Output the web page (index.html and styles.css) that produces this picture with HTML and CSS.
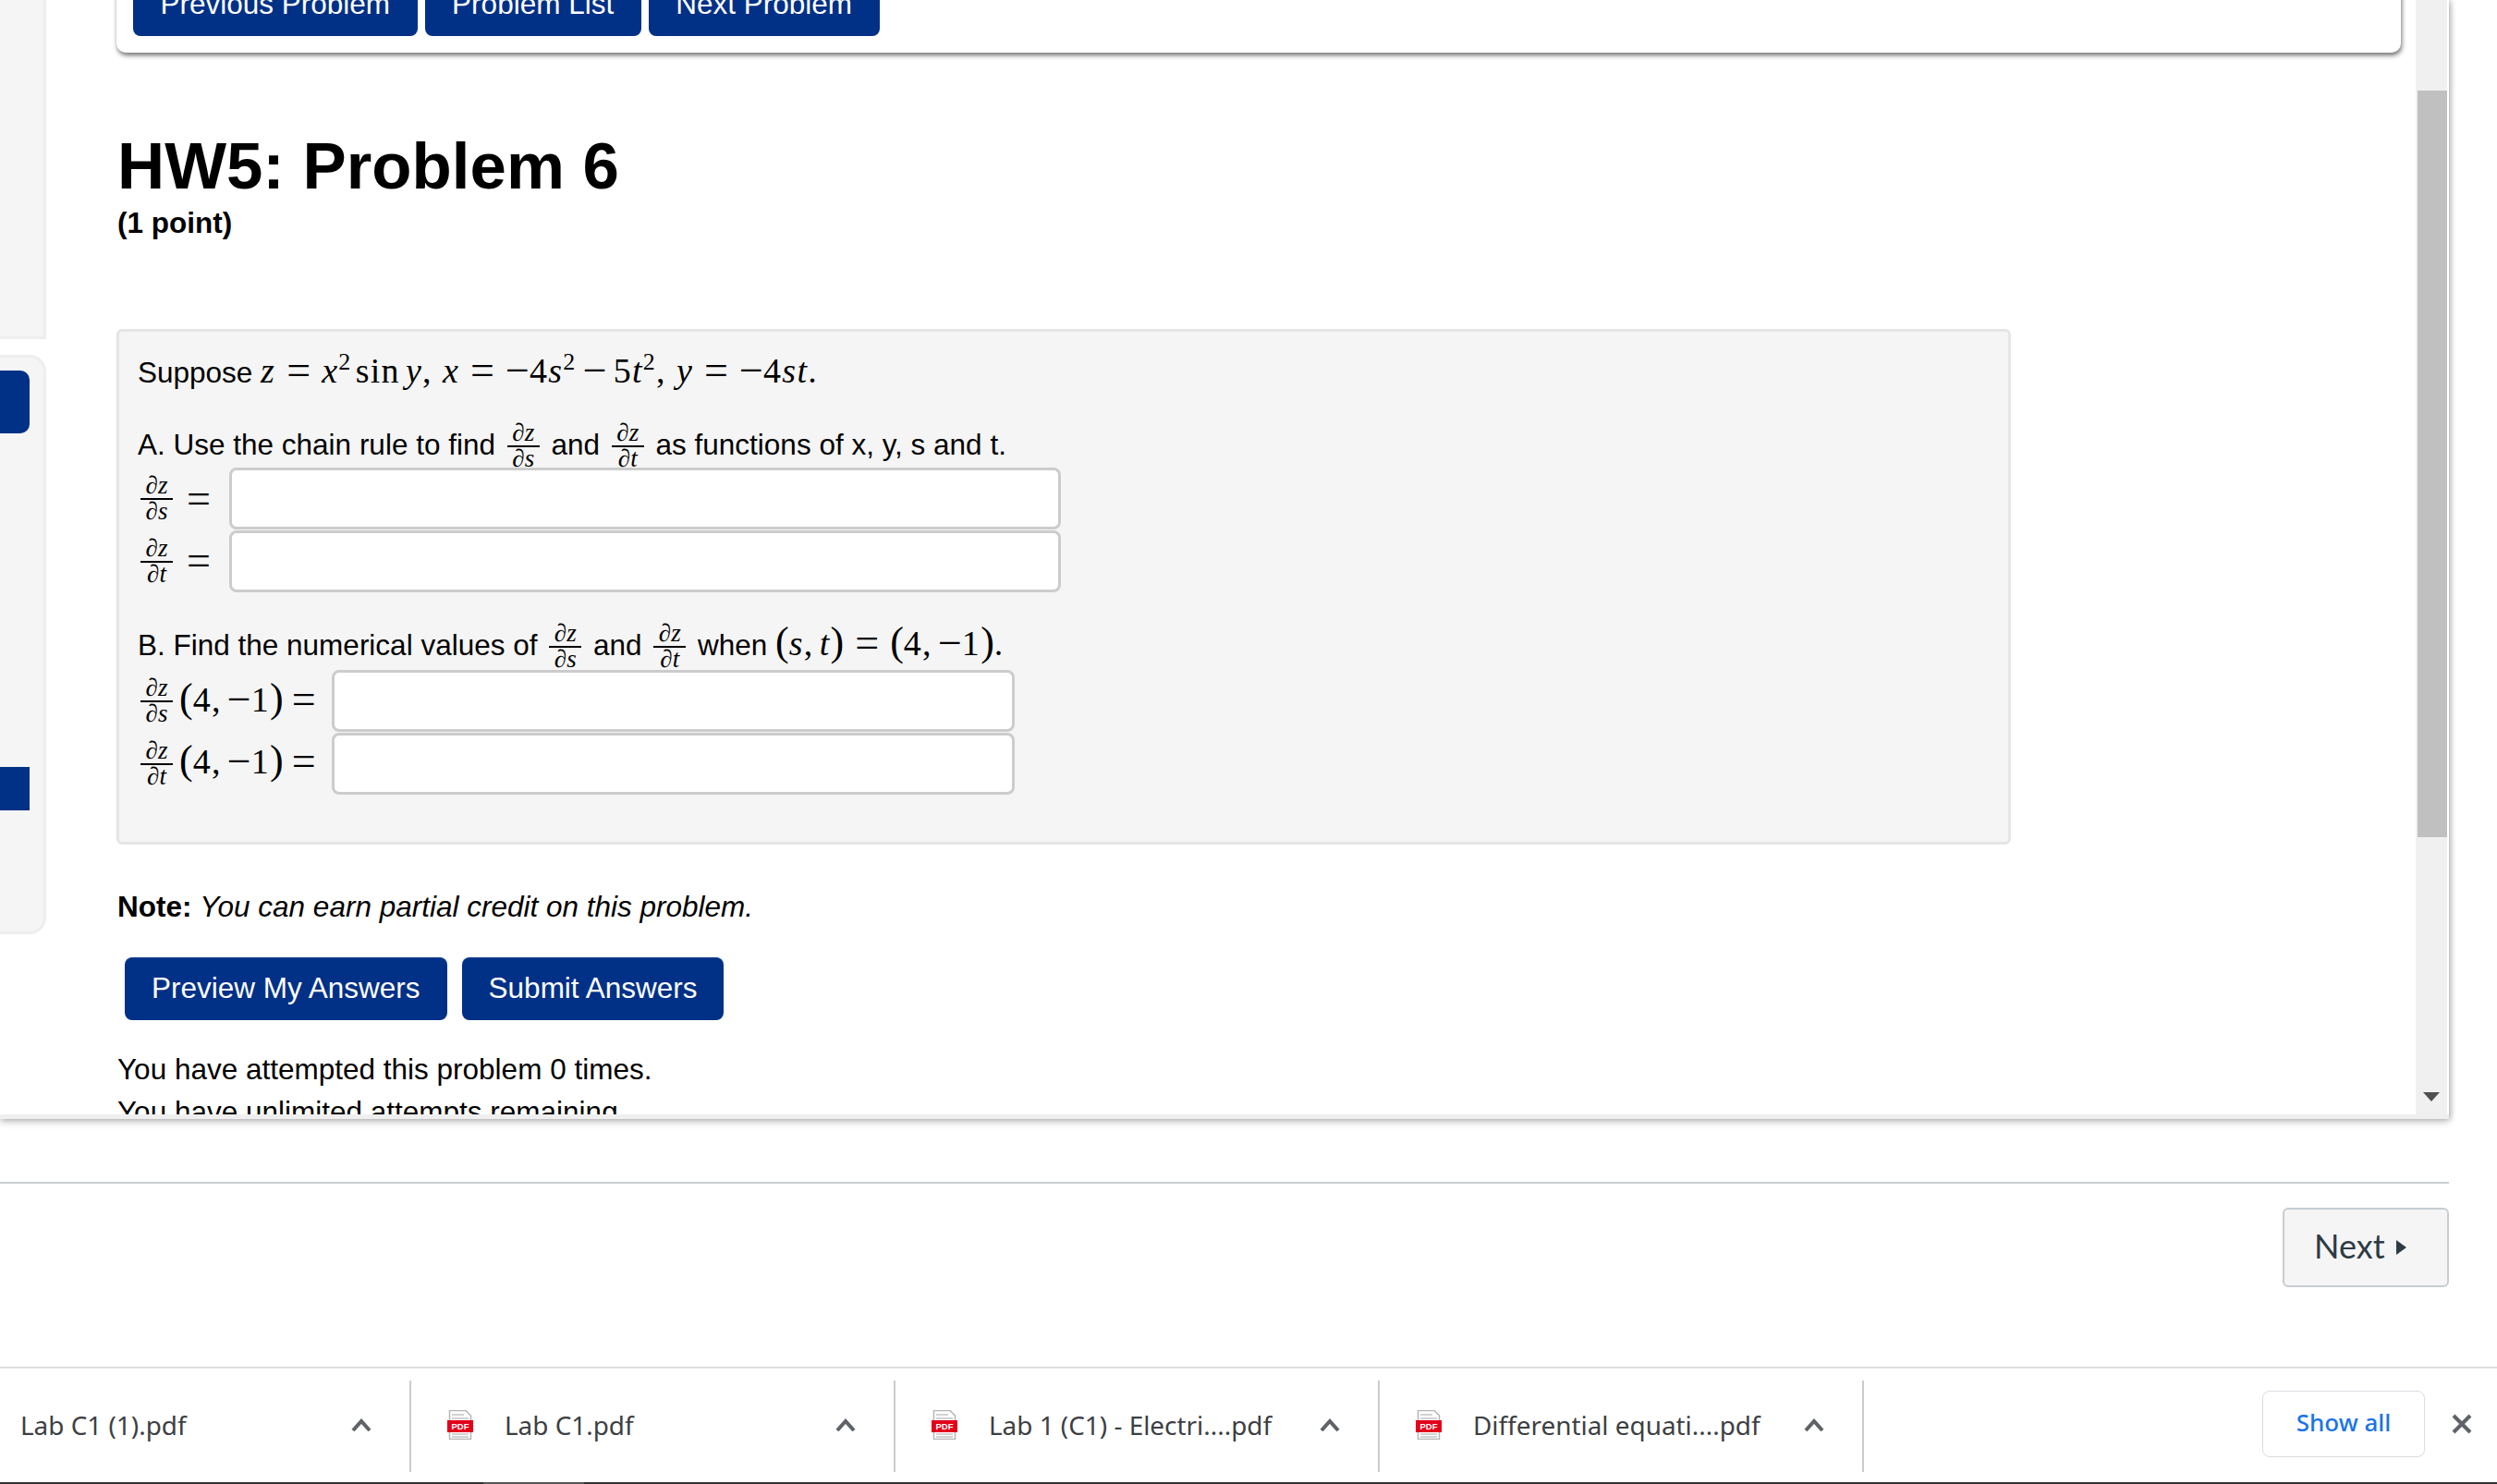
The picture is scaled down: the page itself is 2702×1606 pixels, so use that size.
FILE: index.html
```html
<!DOCTYPE html>
<html lang="en">
<head>
<meta charset="utf-8">
<title>HW5: Problem 6</title>
<link rel="stylesheet" href="styles.css">
</head>
<body>
<div class="page">
  <div class="frame">
    <div class="frame-view">
      <aside class="sidebar">
        <div class="side-top"></div>
        <div class="side-panel">
          <div class="side-tab"></div>
          <div class="side-mark"></div>
        </div>
      </aside>
      <main class="content">
        <nav class="nav-card">
          <a class="btn nav-btn">Previous Problem</a>
          <a class="btn nav-btn">Problem List</a>
          <a class="btn nav-btn">Next Problem</a>
        </nav>
        <h1 class="title">HW5: Problem 6</h1>
        <div class="points">(1 point)</div>
        <section class="problem">
          <div class="line line-intro">Suppose <span class="math"><i>z</i><span class="rel">=</span><i>x</i><sup>2</sup><span class="fn">sin</span><i>y</i>,<span class="sp"></span><i>x</i><span class="rel">=</span><span class="neg">−</span>4<i>s</i><sup>2</sup><span class="bin">−</span>5<i>t</i><sup>2</sup>,<span class="sp"></span><i>y</i><span class="rel">=</span><span class="neg">−</span>4<i>st</i>.</span></div>
          <div class="line line-a">A. Use the chain rule to find <span class="frac"><span class="num">∂<i>z</i></span><span class="den">∂<i>s</i></span></span> and <span class="frac"><span class="num">∂<i>z</i></span><span class="den">∂<i>t</i></span></span> as functions of x, y, s and t.</div>
          <div class="ans-row">
            <div class="ans-label label-short"><span class="frac"><span class="num">∂<i>z</i></span><span class="den">∂<i>s</i></span></span><span class="math eq"><span class="rel">=</span></span></div>
            <input class="ans-input input-long" type="text">
          </div>
          <div class="ans-row">
            <div class="ans-label label-short"><span class="frac"><span class="num">∂<i>z</i></span><span class="den">∂<i>t</i></span></span><span class="math eq"><span class="rel">=</span></span></div>
            <input class="ans-input input-long" type="text">
          </div>
          <div class="line line-b">B. Find the numerical values of <span class="frac"><span class="num">∂<i>z</i></span><span class="den">∂<i>s</i></span></span> and <span class="frac"><span class="num">∂<i>z</i></span><span class="den">∂<i>t</i></span></span> when <span class="math"><span class="paren">(</span><i>s</i>,<span class="thin"></span><i>t</i><span class="paren">)</span><span class="rel">=</span><span class="paren">(</span>4,<span class="thin"></span><span class="neg">−</span>1<span class="paren">)</span>.</span></div>
          <div class="ans-row">
            <div class="ans-label label-long"><span class="frac"><span class="num">∂<i>z</i></span><span class="den">∂<i>s</i></span></span><span class="math paren-group"><span class="paren">(</span>4,<span class="thin"></span><span class="neg">−</span>1<span class="paren">)</span><span class="rel">=</span></span></div>
            <input class="ans-input input-short" type="text">
          </div>
          <div class="ans-row">
            <div class="ans-label label-long"><span class="frac"><span class="num">∂<i>z</i></span><span class="den">∂<i>t</i></span></span><span class="math paren-group"><span class="paren">(</span>4,<span class="thin"></span><span class="neg">−</span>1<span class="paren">)</span><span class="rel">=</span></span></div>
            <input class="ans-input input-short" type="text">
          </div>
        </section>
        <p class="note"><b>Note:</b> <em>You can earn partial credit on this problem.</em></p>
        <div class="actions">
          <button class="btn act-btn" type="button">Preview My Answers</button>
          <button class="btn act-btn" type="button">Submit Answers</button>
        </div>
        <p class="status">You have attempted this problem 0 times.<br>You have unlimited attempts remaining.</p>
      </main>
      <div class="scrollbar">
        <div class="thumb"></div>
        <div class="arrow"></div>
      </div>
    </div>
    <div class="hscroll"></div>
  </div>

  <div class="pager">
    <hr class="rule">
    <a class="next-btn">Next<span class="next-tri"></span></a>
  </div>

  <footer class="shelf">
    <div class="dl dl-first">
      <span class="dl-name">Lab C1 (1).pdf</span>
      <svg class="chev" viewBox="0 0 22 14"><polyline points="2,13 11,3 20,13"/></svg>
    </div>
    <div class="dl">
      <svg class="pdf" viewBox="0 0 28 32"><path class="pdf-page" d="M2.500 .5H20L25.500 6V31.500H2.500Z"/><path class="pdf-lines" d="M5 5H18M5 9H23M5 26H23M5 29H23"/><rect class="pdf-band" x="0" y="11" width="28" height="13"/><text class="pdf-text" x="14" y="21">PDF</text></svg>
      <span class="dl-name">Lab C1.pdf</span>
      <svg class="chev" viewBox="0 0 22 14"><polyline points="2,13 11,3 20,13"/></svg>
    </div>
    <div class="dl">
      <svg class="pdf" viewBox="0 0 28 32"><path class="pdf-page" d="M2.500 .5H20L25.500 6V31.500H2.500Z"/><path class="pdf-lines" d="M5 5H18M5 9H23M5 26H23M5 29H23"/><rect class="pdf-band" x="0" y="11" width="28" height="13"/><text class="pdf-text" x="14" y="21">PDF</text></svg>
      <span class="dl-name">Lab 1 (C1) - Electri....pdf</span>
      <svg class="chev" viewBox="0 0 22 14"><polyline points="2,13 11,3 20,13"/></svg>
    </div>
    <div class="dl">
      <svg class="pdf" viewBox="0 0 28 32"><path class="pdf-page" d="M2.500 .5H20L25.500 6V31.500H2.500Z"/><path class="pdf-lines" d="M5 5H18M5 9H23M5 26H23M5 29H23"/><rect class="pdf-band" x="0" y="11" width="28" height="13"/><text class="pdf-text" x="14" y="21">PDF</text></svg>
      <span class="dl-name">Differential equati....pdf</span>
      <svg class="chev" viewBox="0 0 22 14"><polyline points="2,13 11,3 20,13"/></svg>
    </div>
    <div class="shelf-end">
      <a class="show-all">Show all</a>
      <svg class="close" viewBox="0 0 22 22"><path d="M2 2L20 20M20 2L2 20"/></svg>
    </div>
  </footer>
</div>
</body>
</html>
```
FILE: styles.css
```css
* { box-sizing: border-box; }
html, body { margin: 0; padding: 0; background: #fff; }
body { font-family: "Liberation Sans", Arial, sans-serif; font-size: 31.5px; color: #000; }
.page { width: 2702px; height: 1606px; display: flex; flex-direction: column; overflow: hidden; background: #fff; }

/* iframe */
.frame { width: 2650px; height: 1211px; flex: none; background: #efefef; box-shadow: 0 3px 8px rgba(0,0,0,.22), 2px 0 6px rgba(0,0,0,.2); display: flex; flex-direction: column; }
.frame-view { height: 1206px; flex: none; display: flex; overflow: hidden; background: #fff; }
.hscroll { height: 5px; flex: none; }

.sidebar { width: 50px; flex: none; }
.side-top { height: 367px; background: #f5f5f5; border-right: 3px solid #eee; border-bottom: 3px solid #eee; }
.side-panel { margin-top: 17px; height: 627px; padding-top: 14px; background: #f5f5f5; border: 3px solid #eee; border-left: 0; border-radius: 0 18px 18px 0; }
.side-tab { width: 32px; height: 68px; background: #013087; border-radius: 0 10px 10px 0; }
.side-mark { width: 32px; height: 47px; margin-top: 361px; background: #013087; }

.content { width: 2564px; flex: none; padding-left: 76px; }
.nav-card { width: 2472px; height: 104px; margin-top: -47px; padding: 0 0 18px 18px; background: #fff; border-radius: 10px; box-shadow: 1px 3px 5px rgba(0,0,0,.55); display: flex; align-items: flex-end; gap: 8px; }
.btn { display: inline-flex; align-items: center; justify-content: center; height: 68px; padding: 0 29.5px 3px; background: #013087; color: #fff; font: 31.5px/36px "Liberation Sans", Arial, sans-serif; border: 0; border-top: 1px solid #1a4494; border-radius: 8px; }
.title { margin: 83px 0 0 1px; font-size: 70.8px; line-height: 80px; font-weight: 700; }
.points { margin: 1px 0 0 1px; font-weight: 700; line-height: 40px; }

/* problem */
.problem { width: 2050px; margin-top: 95px; padding: 0 19px 51px; background: #f5f5f5; border: 3px solid #e5e5e5; border-radius: 6px; }
.line { white-space: nowrap; padding-left: 1px; }
.line-intro { height: 94px; padding-top: 17px; line-height: 50px; }
.line-a { height: 53px; padding-top: 1px; }
.line-b { height: 54px; margin-top: 30px; padding-top: 0; }
.math { font-family: "Liberation Serif", "Times New Roman", serif; font-size: 38px; letter-spacing: 1.3px; }
.math i, .num i, .den i { font-style: italic; }
.math sup { font-size: 26px; line-height: 0; vertical-align: 14px; }
.rel { font-size: 46px; line-height: 0; vertical-align: -2px; margin: 0 12px; letter-spacing: 0; }
.neg { font-size: 46px; line-height: 0; vertical-align: -2px; letter-spacing: 0; }
.bin { font-size: 46px; line-height: 0; vertical-align: -2px; margin: 0 7px; letter-spacing: 0; }
.fn { margin: 0 6px 0 4px; }
.sp { display: inline-block; width: 11px; }
.thin { display: inline-block; width: 6px; }
.paren { font-size: 44px; line-height: 0; letter-spacing: 0; }
.frac { display: inline-flex; flex-direction: column; align-items: center; vertical-align: middle; margin: 0 4px; width: 35px; font-family: "Liberation Serif", "Times New Roman", serif; font-size: 27px; line-height: 28px; }
.line .frac { vertical-align: 15px; }
.num { width: 100%; text-align: center; border-bottom: 2px solid #000; height: 30px; }
.den { height: 26px; margin-top: -2px; }
.ans-row { display: flex; align-items: center; height: 67.5px; }
.ans-label { flex: none; display: flex; align-items: center; }
.ans-label .frac { margin-top: -3px; }
.label-short { width: 100px; }
.label-long { width: 211px; }
.eq .rel { margin: 0 0 0 11px; }
.paren-group { margin-left: 3px; margin-top: -4px; }
.paren-group .rel { margin: 0 0 0 9px; }
.ans-input { display: block; height: 67px; background: #fff; border: 3px solid #ccc; border-radius: 8px; padding: 0; }
.input-long { width: 900px; }
.input-short { width: 739px; }

.note { margin: 45px 0 0 1px; line-height: 44px; }
.actions { margin: 33px 0 0 9px; display: flex; gap: 16px; }
.act-btn { padding: 0 29px 3px; }
.status { margin: 30px 0 0 1px; line-height: 46px; }

.scrollbar { width: 34px; flex: none; display: flex; flex-direction: column; background: #f0f0f0; padding-top: 98px; }
.thumb { width: 32px; height: 808px; margin-left: 2px; background: #c0c0c0; }
.arrow { margin: auto 0 14px 8px; width: 0; height: 0; border-style: solid; border-width: 10px 9px 0; border-color: #505050 transparent transparent; }

/* pager */
.pager { width: 2650px; flex: none; height: 268px; padding-top: 68px; }
.rule { height: 2px; margin: 0 0 26px; border: 0; background: #c7cdd1; }
.next-btn { float: right; display: flex; align-items: center; height: 86px; width: 180px; padding: 0 0 5px 32px; background: #f5f5f5; border: 2px solid #c7cdd1; border-radius: 6px; color: #2d3b45; font: 36px Lato, sans-serif; }
.next-tri { margin: 5px 0 0 12px; width: 0; height: 0; border-style: solid; border-width: 8px 0 8px 11px; border-color: transparent transparent transparent #2d3b45; }

/* shelf */
.shelf { height: 127px; flex: none; padding-top: 13px; display: flex; background: #fff; border-top: 2px solid #dedede; position: relative; }
.shelf::after { content: ""; position: absolute; left: 0; right: 0; bottom: 0; height: 2px; background: linear-gradient(90deg, #333 523px, #555 523px, #555 632px, #333 632px); }
.dl { width: 524px; height: 99px; flex: none; display: flex; align-items: center; padding: 0 0 3px 39px; border-right: 2px solid #ccc; font-family: "Noto Sans", sans-serif; font-size: 27.9px; color: #3c4043; }
.dl-first { width: 445px; padding-left: 22px; }
.pdf { width: 28px; height: 32px; flex: none; margin-right: 34px; }
.pdf-page { fill: #fff; stroke: #b5b5b5; stroke-width: 1.500; }
.pdf-lines { fill: none; stroke: #c4c4c4; stroke-width: 1.500; }
.pdf-band { fill: #e3001b; }
.pdf-text { fill: #fff; font: 700 9.500px "Liberation Sans", sans-serif; text-anchor: middle; }
.dl-name { white-space: nowrap; }
.chev { width: 22px; height: 14px; margin-left: auto; margin-right: 41px; fill: none; stroke: #5f6368; stroke-width: 4; }
.shelf-end { flex: 1; display: flex; align-items: center; height: 99px; padding: 0 0 5px 431px; }
.show-all { width: 176px; height: 72px; padding-bottom: 4px; display: flex; align-items: center; justify-content: center; border: 1.500px solid #dadce0; border-radius: 8px; color: #1a73e8; font: 500 26px "Noto Sans", sans-serif; }
.close { width: 22px; height: 22px; margin-left: 29px; fill: none; stroke: #5f6368; stroke-width: 4; }
```
